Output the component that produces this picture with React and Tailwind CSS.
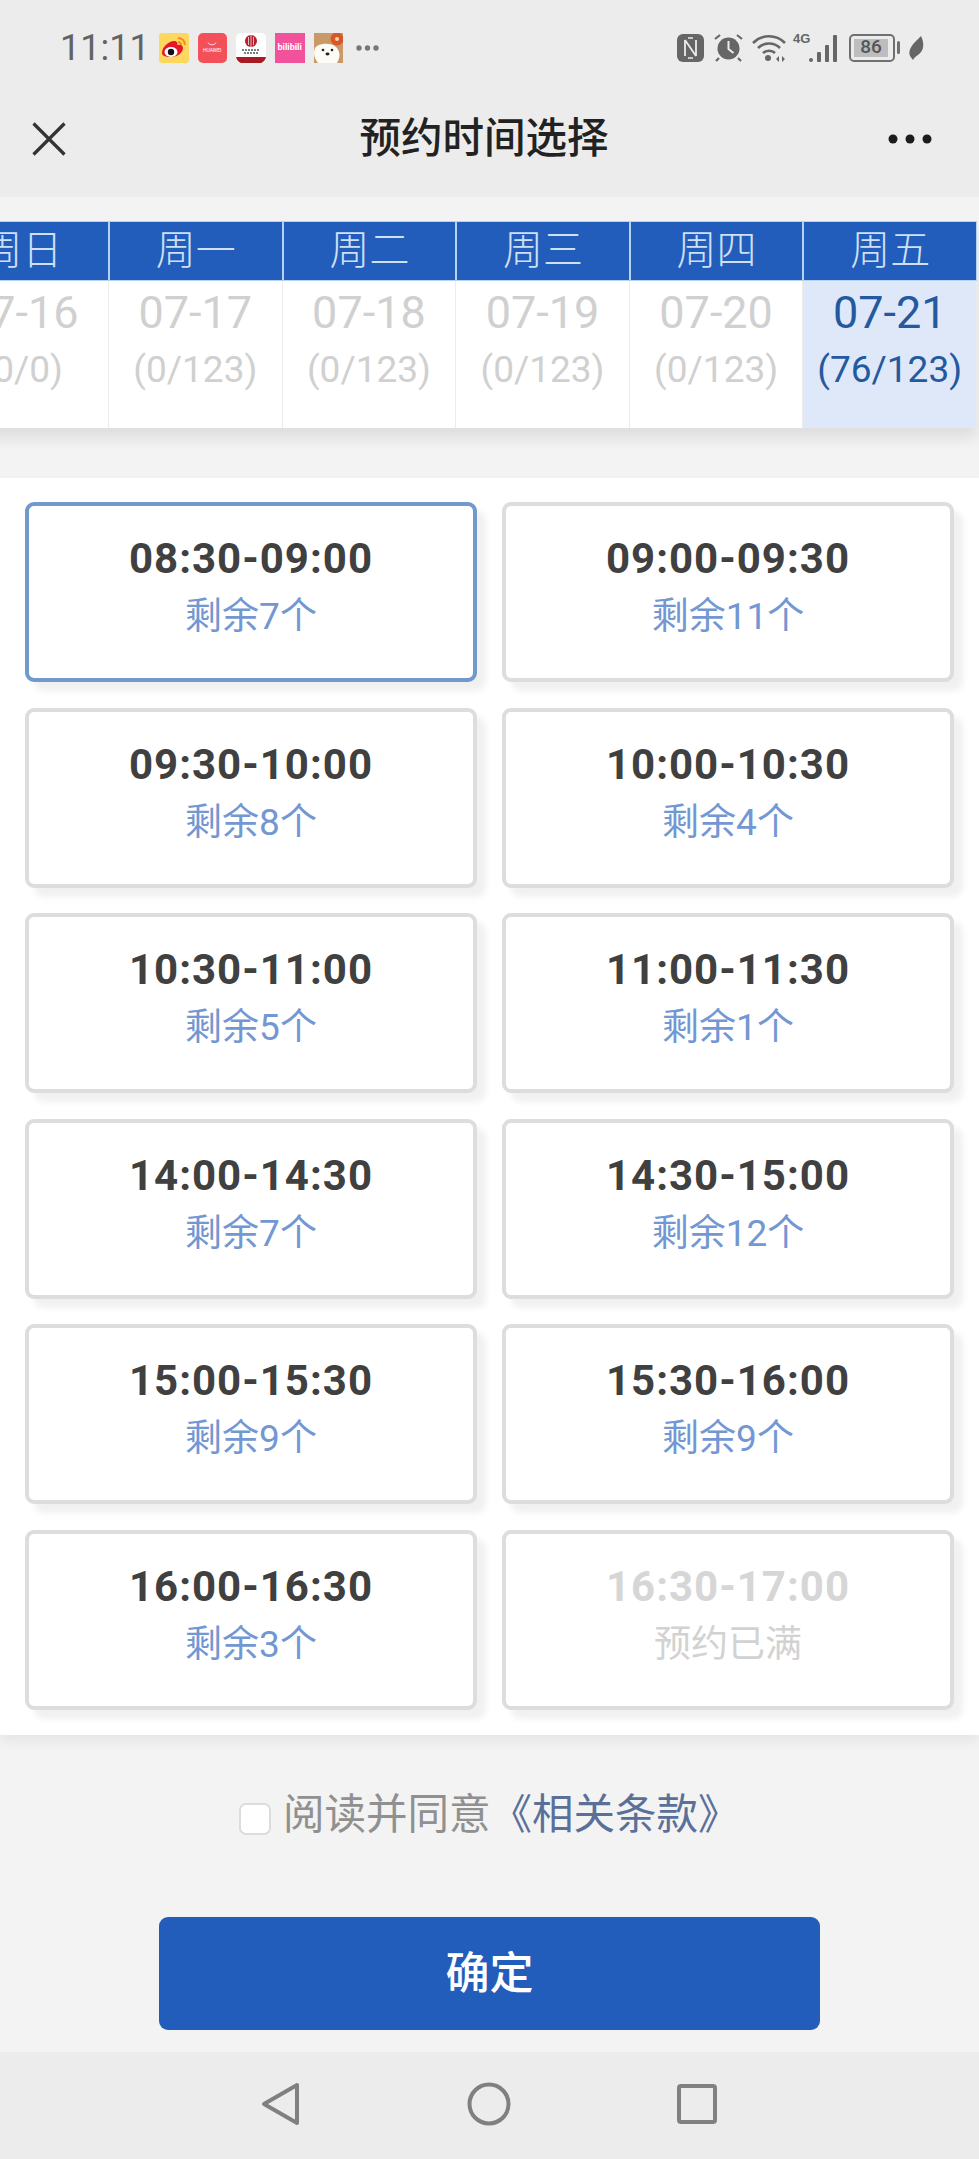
const days = [
  ["周日", "07-16", "(0/0)"],
  ["周一", "07-17", "(0/123)"],
  ["周二", "07-18", "(0/123)"],
  ["周三", "07-19", "(0/123)"],
  ["周四", "07-20", "(0/123)"],
  ["周五", "07-21", "(76/123)", true],
];

const slots = [
  ["08:30-09:00", "剩余7个", "selected"],
  ["09:00-09:30", "剩余11个"],
  ["09:30-10:00", "剩余8个"],
  ["10:00-10:30", "剩余4个"],
  ["10:30-11:00", "剩余5个"],
  ["11:00-11:30", "剩余1个"],
  ["14:00-14:30", "剩余7个"],
  ["14:30-15:00", "剩余12个"],
  ["15:00-15:30", "剩余9个"],
  ["15:30-16:00", "剩余9个"],
  ["16:00-16:30", "剩余3个"],
  ["16:30-17:00", "预约已满", "full"],
];

function AppIcons() {
  return (
    <div className="flex items-center">
      <svg width="30" height="30" viewBox="0 0 30 30" className="ml-[9px]">
        <rect width="30" height="30" rx="3" fill="#fdd85c" />
        <path d="M3 20c0-6 7-12 12-12 3 0 4 2 3 4 3-1 6 0 6 3 0 5-6 9-12 9-5 0-9-1-9-4z" fill="#e6162d" />
        <ellipse cx="12" cy="19" rx="6.5" ry="5" fill="#fff" />
        <circle cx="12" cy="19" r="3.2" fill="#111" />
        <path d="M19 5c4 0 7 3 7 7M19 9c2 0 3 1 3 3" stroke="#f08c1c" strokeWidth="1.8" fill="none" />
      </svg>
      <div className="ml-[9px] flex h-[30px] w-[29px] flex-col items-center justify-center rounded-[5px] bg-[#f4505a] text-white">
        <svg width="10" height="4" viewBox="0 0 10 4"><path d="M1 0.5c1 3 7 3 8 0" stroke="#fff" strokeWidth="0.8" fill="none" /></svg>
        <span className="mt-[1px] text-[5px] leading-[7px]">HUAWEI</span>
      </div>
      <svg width="30" height="30" viewBox="0 0 30 30" className="ml-[9px]">
        <rect width="30" height="30" rx="5" fill="#fff" />
        <circle cx="15" cy="8" r="6" fill="#b5202c" />
        <path d="M15 2v12M12.5 4v8M17.5 4v8" stroke="#fff" strokeWidth="0.7" />
        <path d="M6 17h18M8 20h14" stroke="#555" strokeWidth="1.4" strokeDasharray="2 1" />
        <path d="M0 24h30c-1 4-4 6-6 6H6c-2 0-5-2-6-6z" fill="#a81b24" />
      </svg>
      <div className="ml-[9px] flex h-[30px] w-[30px] items-center justify-center bg-[#f0529c] text-[9px] leading-none font-bold text-white">bilibili</div>
      <svg width="29" height="30" viewBox="0 0 29 30" className="ml-[9px]">
        <rect width="29" height="30" fill="#c99a68" />
        <circle cx="23" cy="6" r="6.5" fill="#d9562a" />
        <circle cx="23" cy="6" r="2" fill="#f5d9a8" />
        <path d="M1 15c3-5 16-6 21-1 5 5 4 11 1 16H4c-4-5-5-10-3-15z" fill="#fdfbf6" />
        <circle cx="9" cy="17" r="1.3" fill="#222" />
        <circle cx="18" cy="17" r="1.3" fill="#222" />
        <ellipse cx="13.500" cy="21" rx="2" ry="1.4" fill="#222" />
      </svg>
      <svg width="23" height="6" viewBox="0 0 23 6" className="ml-[13px]">
        <circle cx="3" cy="3" r="2.700" fill="#777" />
        <circle cx="11.500" cy="3" r="2.700" fill="#777" />
        <circle cx="20" cy="3" r="2.700" fill="#777" />
      </svg>
    </div>
  );
}

function SystemIcons() {
  return (
    <div className="flex items-center">
      <svg width="27" height="28" viewBox="0 0 27 28">
        <rect width="27" height="28" rx="6" fill="#666" />
        <path d="M8 6v16M8 6l11 16M19 6v16" stroke="#ececec" strokeWidth="1.800" fill="none" />
        <path d="M11 4h5M11 24h5" stroke="#ececec" strokeWidth="1.500" />
      </svg>
      <svg width="29" height="29" viewBox="0 0 29 29" className="ml-[10px]">
        <circle cx="14.500" cy="15.500" r="11" fill="#666" />
        <path d="M14.500 8v8l5 4" stroke="#ececec" strokeWidth="2" fill="none" />
        <path d="M1 6l5-4M28 6l-5-4M5 25l-3 3M24 25l3 3" stroke="#666" strokeWidth="2.200" />
      </svg>
      <svg width="34" height="29" viewBox="0 0 34 29" className="ml-[9px]">
        <path d="M1 10c9-9 23-9 32 0M6 15c6-6 16-6 22 0M11 20c3-3 9-3 12 0" stroke="#666" strokeWidth="2.600" fill="none" />
        <circle cx="16" cy="25" r="3" fill="#666" />
        <path d="M24 26l3-3v6zM33 26l-3-3v6z" fill="#666" />
      </svg>
      <div className="relative ml-[7px] h-[28px] w-[46px]">
        <span className="absolute top-[-2px] left-0 text-[13px] leading-[14px] font-bold text-[#666] [font-family:'Liberation_Sans_Narrow','Liberation_Sans',sans-serif]">4G</span>
        <svg width="30" height="28" viewBox="0 0 30 28" className="absolute top-0 left-[16px]">
          <rect x="0" y="24" width="4" height="4" rx="2" fill="#666" />
          <rect x="8" y="18" width="4" height="10" rx="1" fill="#666" />
          <rect x="16" y="11" width="4" height="17" rx="1" fill="#666" />
          <rect x="24" y="1" width="4" height="27" rx="1" fill="#666" />
        </svg>
      </div>
      <div className="ml-[10px] flex h-[28px] w-[46px] items-center rounded-[5px] border-2 border-[#707070] p-[3px]">
        <div className="flex h-full w-[34px] items-center justify-center bg-[#bdbdbd] text-[19px] font-medium text-[#555] [font-family:Roboto,sans-serif]">86</div>
      </div>
      <div className="ml-[2px] h-[13px] w-[3px] rounded-[2px] bg-[#707070]" />
      <svg width="16" height="24" viewBox="0 0 16 24" className="ml-[8px]">
        <path d="M13 0c3 6 3 12 0 16-2 3-6 4-8 8-1-1-2-3-3-4-3-7 5-14 11-20z" fill="#666" />
      </svg>
    </div>
  );
}

export default function App() {
  return (
    <div className="flex min-h-[2159px] w-[979px] flex-col overflow-hidden bg-[#f3f3f3] [font-family:Roboto,'Noto_Sans_CJK_SC',sans-serif]">
      <header className="h-[197px] bg-[#ececec]">
        <div className="flex h-[95px] items-center justify-between pr-[55px] pl-[60px]">
          <div className="flex items-center">
            <span className="text-[36px] leading-[40px] text-[#636363]">11:11</span>
            <AppIcons />
          </div>
          <SystemIcons />
        </div>
        <div className="flex h-[88px] items-center justify-between pr-[47px] pl-[32px]">
          <svg width="34" height="34" viewBox="0 0 34 34">
            <path d="M1.500 1.500l31 31M32.500 1.500l-31 31" stroke="#333" strokeWidth="3.200" />
          </svg>
          <h1 className="ml-[14px] text-[41.500px] leading-[50px] font-medium text-[#222]">预约时间选择</h1>
          <svg width="44" height="10" viewBox="0 0 44 10">
            <circle cx="5" cy="5" r="4.500" fill="#1c1c1c" />
            <circle cx="22" cy="5" r="4.500" fill="#1c1c1c" />
            <circle cx="39" cy="5" r="4.500" fill="#1c1c1c" />
          </svg>
        </div>
      </header>

      <section className="mt-[24px] flex justify-end overflow-hidden pr-[2px] pb-[30px]">
        <div className="flex shrink-0 shadow-[0_10px_14px_rgba(0,0,0,0.09)]">
          {days.map(([week, date, count, active]) => (
            <div key={date} className="flex w-[173.600px] shrink-0 flex-col">
              <div className="flex h-[60px] items-center justify-center border border-[#b5d3ef] bg-[#225dbb] text-[40px] leading-none font-light text-[#cfe0f5]">
                {week}
              </div>
              <div className={`flex h-[147px] flex-col items-center border-r border-[#ececec] ${active ? "bg-[#dfe8f8] text-[#22599f]" : "bg-white text-[#d0d0d0]"}`}>
                <span className="mt-[4px] text-[45px] leading-[56px]">{date}</span>
                <span className="mt-[1px] text-[37px] leading-[56px]">{count}</span>
              </div>
            </div>
          ))}
        </div>
      </section>

      <section className="mt-[20px] grid h-[1257px] grid-cols-2 content-start gap-x-[25px] gap-y-[25.500px] bg-white pt-[24px] pr-[25px] pl-[25px] shadow-[0_6px_12px_rgba(0,0,0,0.06)]">
        {slots.map(([time, left, state]) => (
          <div
            key={time}
            className={`flex h-[180px] flex-col items-center rounded-[9px] border-[4px] bg-white pt-[24px] shadow-[9px_9px_6px_rgba(0,0,0,0.06)] ${state === "selected" ? "border-[#7099cc]" : "border-[#dddddd]"}`}
          >
            <span className={`text-[42px] leading-[58px] font-bold tracking-[1px] ${state === "full" ? "text-[#d6d6d6]" : "text-[#404040]"}`}>{time}</span>
            <span className={`text-[37px] leading-[58px] ${state === "full" ? "text-[#d2d2d2]" : "text-[#7297d2]"}`}>{left}</span>
          </div>
        ))}
      </section>

      <label className="mt-[55px] flex h-[50px] items-center pl-[239px]">
        <span className="mt-[8px] h-[32px] w-[32px] rounded-[7px] border-2 border-[#dcdcdc] bg-white" />
        <span className="ml-[12px] text-[41.500px] leading-[50px] text-[#909090]">阅读并同意</span>
        <span className="text-[41.500px] leading-[50px] text-[#5a7099]">《相关条款》</span>
      </label>

      <div className="mt-[77px] px-[159px]">
        <button className="flex h-[113px] w-full items-center justify-center rounded-[9px] bg-[#225dbb] text-[44px] font-medium text-white">确定</button>
      </div>

      <nav className="mt-[22px] flex h-[107px] items-center bg-[#ececec] pb-[3px] pl-[261px]">
        <svg width="40" height="44" viewBox="0 0 40 44">
          <path d="M36 3v38L3 22z" fill="none" stroke="#808080" strokeWidth="4" strokeLinejoin="round" />
        </svg>
        <svg width="44" height="44" viewBox="0 0 44 44" className="ml-[166px]">
          <circle cx="22" cy="22" r="19.500" fill="none" stroke="#808080" strokeWidth="4" />
        </svg>
        <svg width="40" height="40" viewBox="0 0 40 40" className="ml-[166px]">
          <rect x="2" y="2" width="36" height="36" rx="2" fill="none" stroke="#808080" strokeWidth="4" />
        </svg>
      </nav>
    </div>
  );
}
